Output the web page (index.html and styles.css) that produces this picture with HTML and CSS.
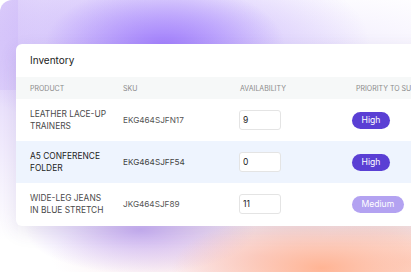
FILE: index.html
```html
<!DOCTYPE html>
<html lang="en">
<head>
  <meta charset="UTF-8">
  <meta name="viewport" content="width=device-width, initial-scale=1.0">
  <title>Inventory</title>
  <link rel="stylesheet" href="styles.css">
</head>
<body>
  <div class="backdrop">
    <div class="card">
      <h1>Inventory</h1>

      <div class="row head">
        <span>Product</span>
        <span>SKU</span>
        <span>Availability</span>
        <span>Priority to supplier</span>
      </div>

      <div class="row">
        <span class="product">Leather lace-up<br>trainers</span>
        <span class="sku">EKG464SJFN17</span>
        <span><input class="qty" type="text" value="9"></span>
        <span><span class="badge high">High</span></span>
      </div>

      <div class="row active">
        <span class="product">A5 conference<br>folder</span>
        <span class="sku">EKG464SJFF54</span>
        <span><input class="qty" type="text" value="0"></span>
        <span><span class="badge high">High</span></span>
      </div>

      <div class="row">
        <span class="product">Wide-leg jeans<br>in blue stretch</span>
        <span class="sku">JKG464SJF89</span>
        <span><input class="qty" type="text" value="11"></span>
        <span><span class="badge medium">Medium</span></span>
      </div>
    </div>
  </div>
</body>
</html>
```

FILE: styles.css
```css
html, body {
  margin: 0;
  padding: 0;
  width: 411px;
  height: 272px;
  overflow: hidden;
  background: #fff;
  font-family: Inter, "Noto Sans", sans-serif;
}
/* soft purple glow behind the top of the card, peach glow below it */
.backdrop {
  height: 272px;
  padding: 44px 0 0 16px;
  box-sizing: border-box;
  overflow: hidden;
  border-radius: 12px 0 0 0;
  background:
    radial-gradient(ellipse 120px 62px at 165px 46px, rgba(150, 112, 252, 0.75), rgba(150, 112, 252, 0) 100%),
    radial-gradient(ellipse 210px 95px at 160px 44px, rgba(175, 145, 250, 0.7), rgba(175, 145, 250, 0) 100%),
    radial-gradient(ellipse 170px 60px at 330px 45px, rgba(238, 232, 253, 0.7), rgba(238, 232, 253, 0) 100%),
    linear-gradient(to right, rgba(222, 208, 250, 0.95), rgba(222, 208, 250, 0.6) 40px, rgba(222, 208, 250, 0) 150px) 0 0 / 100% 90px no-repeat,
    linear-gradient(to bottom, rgba(212, 194, 248, 0.95), rgba(222, 208, 250, 0.55) 120px, rgba(255, 255, 255, 0) 240px) 0 0 / 18px 100% no-repeat,
    radial-gradient(ellipse 150px 56px at 322px 268px, rgba(255, 180, 148, 1), rgba(255, 188, 160, 0.5) 55%, rgba(255, 188, 160, 0) 100%),
    radial-gradient(ellipse 115px 44px at 140px 230px, rgba(195, 170, 242, 0.9), rgba(195, 170, 242, 0) 100%),
    radial-gradient(ellipse 210px 55px at 260px 256px, rgba(246, 218, 226, 0.95), rgba(246, 218, 226, 0) 100%),
    radial-gradient(ellipse 90px 55px at 405px 262px, rgba(255, 210, 192, 1), rgba(255, 210, 192, 0) 100%),
    #fff;
}
.card {
  width: 430px;
  height: 182px;
  background: #fff;
  border-radius: 6px;
  box-shadow: 0 6px 18px rgba(70, 50, 130, 0.12);
  overflow: hidden;
}
h1 {
  margin: 0;
  height: 33px;
  line-height: 33px;
  padding-left: 14px;
  font-size: 10px;
  font-weight: 400;
  color: #222;
}
.row {
  display: grid;
  grid-template-columns: 93px 117px 116px 1fr;
  align-items: center;
  height: 43px;
  padding-left: 14px;
  font-size: 8.4px;
  color: #4a4a4a;
  text-transform: uppercase;
}
.row + .row {
  height: 42px;
}
.row.head {
  height: 22px;
  background: #f6f8f8;
  color: #8a8a8a;
  font-size: 7px;
  white-space: nowrap;
}
.row.active {
  background: #eef4fe;
  color: #222;
}
.product {
  line-height: 12.5px;
}
.sku {
  font-size: 8.2px;
  color: #555;
}
.row.active .sku {
  color: #444;
}
.qty {
  display: block;
  margin-left: -1px;
  width: 42px;
  height: 20px;
  box-sizing: border-box;
  padding: 0 3px;
  border: 1px solid #e4e4e4;
  border-radius: 3px;
  background: #fff;
  font-family: inherit;
  font-size: 8.5px;
  color: #222;
}
.badge {
  display: inline-block;
  margin-left: -4px;
  height: 17px;
  line-height: 17px;
  padding: 0 9.5px;
  border-radius: 9px;
  font-size: 8.6px;
  color: #fff;
  text-transform: none;
}
.badge.high {
  background: #5a3fd4;
}
.badge.medium {
  background: #b3a2f1;
}
```
